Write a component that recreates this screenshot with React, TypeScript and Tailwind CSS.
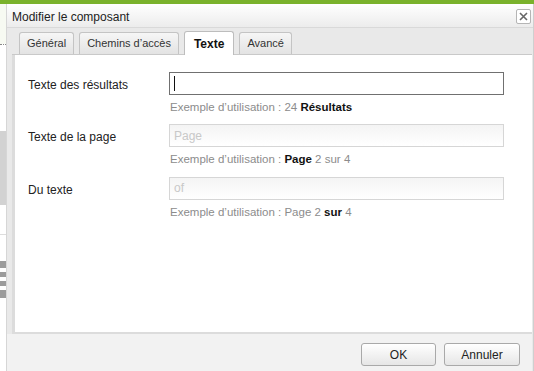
import React from "react";

const font = "font-['Liberation_Sans','Arial',sans-serif]";

const fields = [
  {
    label: "Texte des résultats",
    placeholder: "",
    focused: true,
    hint: (
      <>
        Exemple d’utilisation : 24 <b className="text-[#111] font-bold">Résultats</b>
      </>
    ),
  },
  {
    label: "Texte de la page",
    placeholder: "Page",
    focused: false,
    hint: (
      <>
        Exemple d’utilisation : <b className="text-[#111] font-bold">Page</b> 2 sur 4
      </>
    ),
  },
  {
    label: "Du texte",
    placeholder: "of",
    focused: false,
    hint: (
      <>
        Exemple d’utilisation : Page 2 <b className="text-[#111] font-bold">sur</b> 4
      </>
    ),
  },
];

const tabs = ["Général", "Chemins d’accès", "Texte", "Avancé"];

const App: React.FC = () => {
  return (
    <div className={`w-[534px] h-[371px] overflow-hidden flex flex-col bg-white ${font}`}>
      {/* green page header peeking above the dialog */}
      <div className="h-[4px] bg-[#7ab22c] shrink-0" />

      <div className="flex flex-1 min-h-0">
        {/* page behind the dialog */}
        <div className="w-[7px] flex flex-col bg-white border-r border-[#d6d6d6]">
          <div className="h-[40px] bg-[#f7faf2]" />
          <div className="h-[1px] border-t border-dotted border-[#888]" />
          <div className="h-[86px]" />
          <div className="h-[74px] bg-[#d2d2d2]" />
          <div className="h-[30px] border-b border-[#ddd]" />
          <div className="h-[7px] bg-[#9b9b9b] mt-[26px]" />
          <div className="h-[4px]" />
          <div className="h-[5px] bg-[#9b9b9b]" />
          <div className="h-[4px]" />
          <div className="h-[5px] bg-[#9b9b9b]" />
          <div className="h-[4px]" />
          <div className="h-[8px] bg-[#9b9b9b]" />
        </div>

        {/* dialog */}
        <div className="flex-1 flex flex-col border-r border-[#cfcfcf] bg-[#f2f2f2]">
          {/* title bar */}
          <div className="h-[24px] flex items-center justify-between pl-[5px] pr-[2px] pt-[2px] bg-gradient-to-b from-white to-[#ececec] border-b border-[#d9d9d9]">
            <span className="text-[12px] text-[#222]">Modifier le composant</span>
            <button className="w-[15px] h-[15px] flex items-center justify-center border border-[#b5b5b5] rounded-[2px] bg-white">
              <svg width="9" height="9" viewBox="0 0 9 9">
                <path d="M1 1L8 8M8 1L1 8" stroke="#666" strokeWidth="1.6" />
              </svg>
            </button>
          </div>

          {/* body */}
          <div className="flex-1 flex flex-col bg-[#e9e9e9] pl-[5px] pr-[1px]">
            {/* tab strip */}
            <div className="h-[27px] flex items-end gap-[5px] pl-[7px] border-b border-[#c9c9c9]">
              {tabs.map((t) => {
                const active = t === "Texte";
                return active ? (
                  <div
                    key={t}
                    className="h-[24px] -mb-px px-[9px] flex items-center text-[12px] font-bold text-[#111] bg-white border border-b-0 border-[#bdbdbd] rounded-t-[3px]"
                  >
                    {t}
                  </div>
                ) : (
                  <div
                    key={t}
                    className="h-[22px] px-[7px] flex items-center text-[11px] text-[#333] bg-gradient-to-b from-[#f6f6f6] to-[#e3e3e3] border border-b-0 border-[#c4c4c4] rounded-t-[3px]"
                  >
                    {t}
                  </div>
                );
              })}
            </div>

            {/* content panel */}
            <div className="h-[279px] bg-white border-l-[3px] border-b-[2px] border-[#dcdcdc] pl-[13px] pr-[28px] pt-[17px]">
              {fields.map((f, i) => (
                <div key={i} className="flex mb-[8px]">
                  <div className="w-[141px] pt-[4px] text-[12px] text-[#222]">{f.label}</div>
                  <div className="flex-1 flex flex-col">
                    <div
                      className={`h-[23px] flex items-center pl-[4px] text-[12px] ${
                        f.focused
                          ? "border border-[#707070] bg-white"
                          : "border border-[#d6d6d6] bg-gradient-to-b from-[#f4f4f4] to-white"
                      }`}
                    >
                      {f.focused ? (
                        <span className="w-px h-[15px] bg-[#111]" />
                      ) : (
                        <span className="text-[#c8c8c8]">{f.placeholder}</span>
                      )}
                    </div>
                    <div className="mt-[4px] pl-[1px] text-[11.5px] text-[#8c8c8c]">{f.hint}</div>
                  </div>
                </div>
              ))}
            </div>

            {/* footer */}
            <div className="flex-1 flex items-center justify-end gap-[8px] pr-[12px] pt-[4px] bg-[#f2f2f2] -ml-[5px]">
              <button className="w-[75px] h-[23px] text-[12px] text-[#222] border border-[#a9a9a9] rounded-[3px] bg-gradient-to-b from-white to-[#e6e6e6]">
                OK
              </button>
              <button className="w-[76px] h-[23px] text-[12px] text-[#222] border border-[#a9a9a9] rounded-[3px] bg-gradient-to-b from-white to-[#e6e6e6]">
                Annuler
              </button>
            </div>
          </div>
        </div>
      </div>
    </div>
  );
};

export default App;
